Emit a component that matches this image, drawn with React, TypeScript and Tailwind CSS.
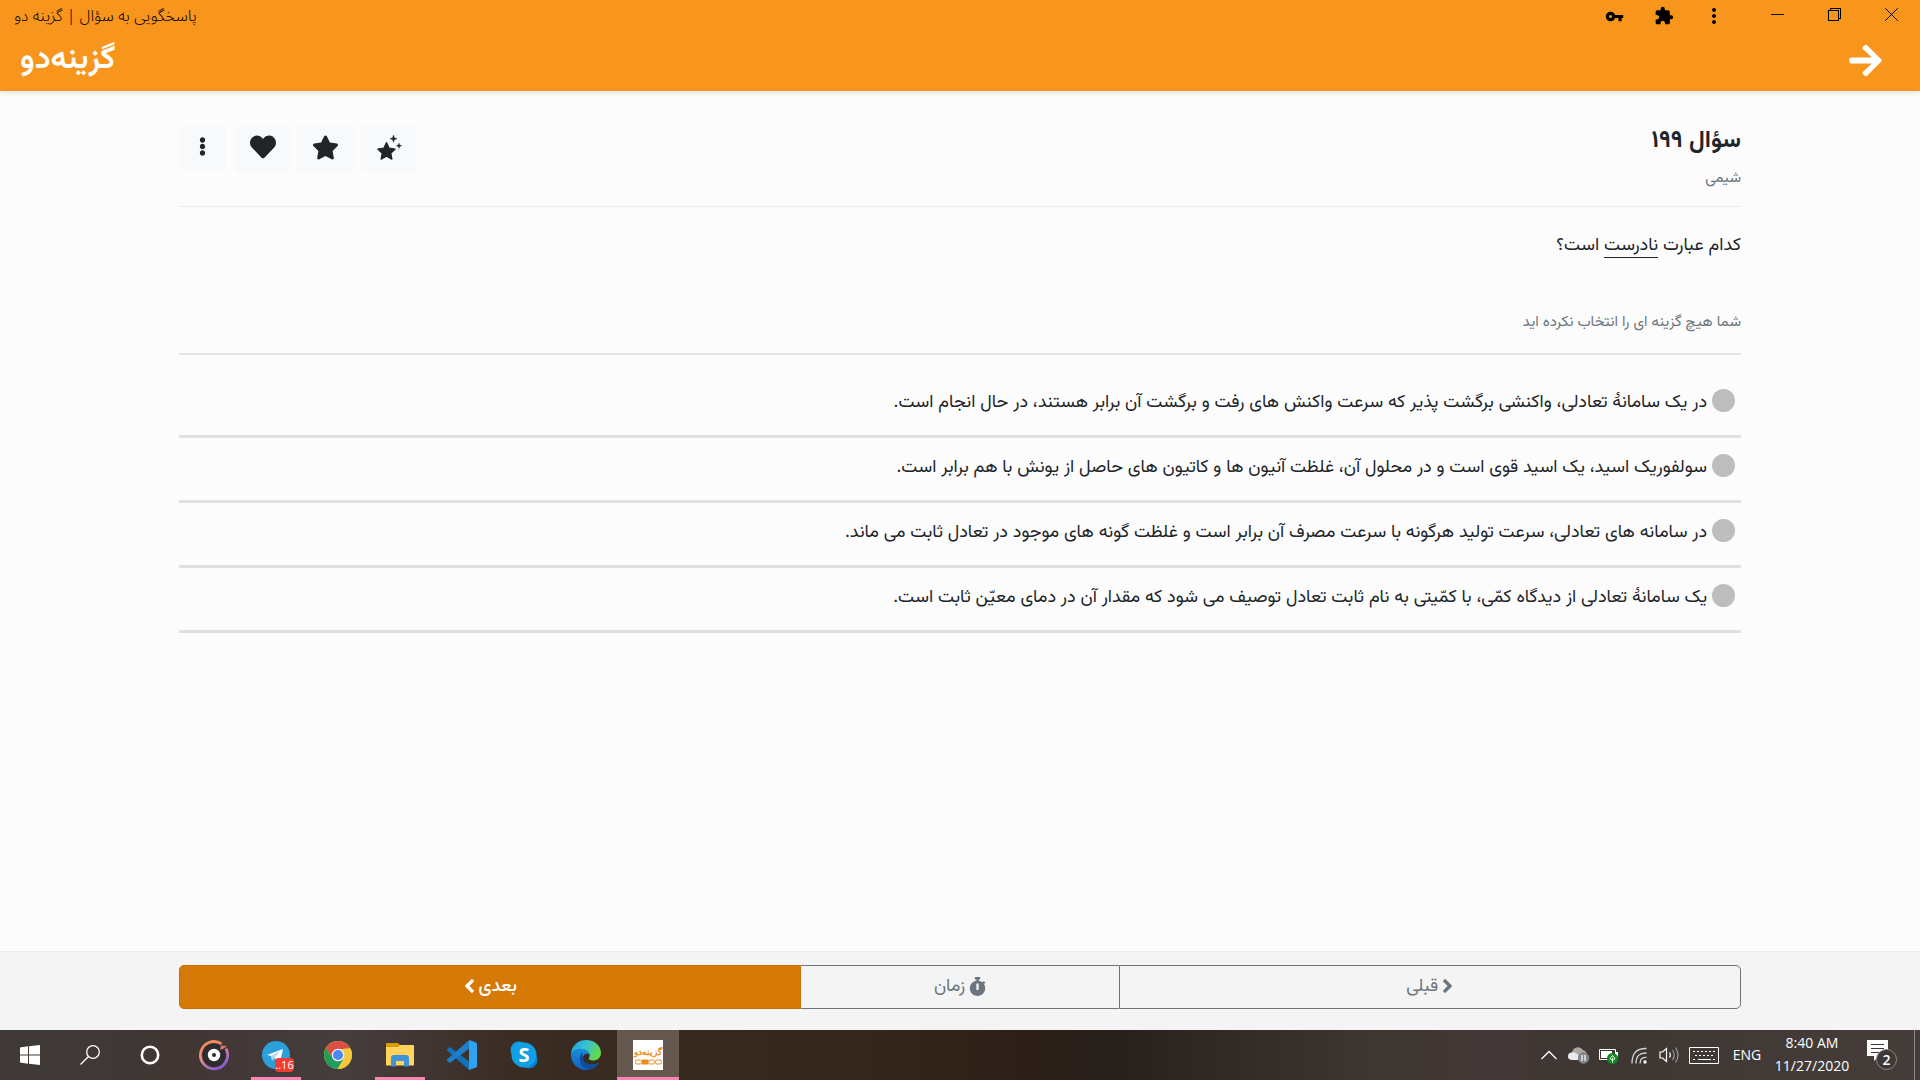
import type { ReactNode } from "react";
import { FaAngleLeft, FaAngleRight, FaArrowRight, FaEllipsisV, FaHeart, FaStar, FaStopwatch } from "react-icons/fa";
import { MdExtension, MdMoreVert, MdVpnKey } from "react-icons/md";

const OPTIONS = [
  "در یک سامانهٔ تعادلی، واکنشی برگشت پذیر که سرعت واکنش های رفت و برگشت آن برابر هستند، در حال انجام است.",
  "سولفوریک اسید، یک اسید قوی است و در محلول آن، غلظت آنیون ها و کاتیون های حاصل از یونش با هم برابر است.",
  "در سامانه های تعادلی، سرعت تولید هرگونه با سرعت مصرف آن برابر است و غلظت گونه های موجود در تعادل ثابت می ماند.",
  "یک سامانهٔ تعادلی از دیدگاه کمّی، با کمّیتی به نام ثابت تعادل توصیف می شود که مقدار آن در دمای معیّن ثابت است.",
];

function TitleBar() {
  return (
    <div className="flex h-8 items-start justify-between pl-3.5 text-black">
      <span dir="rtl" className="pt-1.5 font-['Noto_Sans_Arabic','DejaVu_Sans_Condensed',sans-serif] text-base leading-5 font-light">
        پاسخگویی به سؤال | گزینه دو
      </span>
      <div className="flex h-8">
        <button aria-label="Passwords" className="flex w-[50px] items-center justify-center"><MdVpnKey size={19} /></button>
        <button aria-label="Extensions" className="flex w-[50px] items-center justify-center"><MdExtension size={20} /></button>
        <button aria-label="Menu" className="flex w-[50px] items-center justify-center"><MdMoreVert size={24} /></button>
        <button aria-label="Minimize" className="ml-2.5 flex h-7 w-[57px] items-center justify-center">
          <svg width="13" height="13" viewBox="0 0 13 13" stroke="currentColor" shapeRendering="crispEdges"><path d="M0 6.5h13" /></svg>
        </button>
        <button aria-label="Restore" className="flex h-[29px] w-14 items-center justify-center">
          <svg width="13" height="13" viewBox="0 0 13 13" fill="none" stroke="currentColor" shapeRendering="crispEdges"><path d="M.5 2.5h10v10H.5zM2.500 2.500v-2h10v10h-2" /></svg>
        </button>
        <button aria-label="Close" className="flex h-[29px] w-[58px] items-center justify-center">
          <svg width="13" height="13" viewBox="0 0 13 13" stroke="currentColor"><path d="M.3.3l12.400 12.400M12.700.3L.3 12.700" /></svg>
        </button>
      </div>
    </div>
  );
}

function Header() {
  return (
    <header className="relative z-10 h-[91px] bg-[#f8951d] shadow-[0_2px_5px_rgba(0,0,0,0.1)]">
      <TitleBar />
      <div className="flex h-14 items-center justify-between pl-5 pr-9">
        <a href="#home" dir="rtl" className="text-[32px] leading-[56px] font-semibold text-white">گزینه‌دو</a>
        <button aria-label="بازگشت" className="text-white"><FaArrowRight size={37} /></button>
      </div>
    </header>
  );
}

function ToolButton({ label, className, children }: { label: string; className: string; children: ReactNode }) {
  return (
    <button aria-label={label} className={`flex items-center justify-center rounded bg-[#f8f9fa] text-[#212529] ${className}`}>
      {children}
    </button>
  );
}

function Sparkle() {
  return (
    <svg width="25" height="25" viewBox="0 0 25 25" fill="currentColor" stroke="currentColor" strokeLinejoin="round">
      <path strokeWidth="1.200" d="M9.500 7.600l2.700 5.600 6 .8-4.400 4.200 1.100 6-5.400-2.900-5.400 2.900 1.100-6L.8 14l6-.8z" />
      <path strokeWidth=".3" d="M16.500 0l1 2.700 2.700 1-2.700 1-1 2.700-1-2.700-2.700-1 2.700-1zM22 8l.8 2 2 .8-2 .8-.8 2-.8-2-2-.8 2-.8z" />
    </svg>
  );
}

function Question() {
  return (
    <main dir="rtl" className="mx-auto w-full max-w-[1562px] flex-1 pt-8 text-[#212529]">
      <div className="flex h-[84px] items-start justify-between border-b border-[#ebebec]">
        <div className="flex flex-col pt-0.5">
          <h1 className="text-2xl leading-8 font-bold">سؤال ۱۹۹</h1>
          <p className="mt-2.5 text-[15px] leading-6 text-[#6c757d]">شیمی</p>
        </div>
        <div dir="ltr" className="flex items-start pt-[3px]">
          <ToolButton label="بیشتر" className="mr-[9px] h-11 w-[47px] pb-1"><FaEllipsisV size={19} /></ToolButton>
          <ToolButton label="علاقه‌مندی" className="mr-[5px] h-[46px] w-14 pb-1"><FaHeart size={26} /></ToolButton>
          <ToolButton label="ستاره" className="mr-1.5 h-[46px] w-[59px] pb-1"><FaStar size={27} /></ToolButton>
          <ToolButton label="ویژه" className="h-[46px] w-14 pb-1"><Sparkle /></ToolButton>
        </div>
      </div>
      <p className="mt-[25px] text-lg leading-7">
        کدام عبارت <span className="inline-block border-b border-[#212529] leading-[22px]">نادرست</span> است؟
      </p>
      <p className="mt-[51px] text-[15px] leading-6 text-[#6c757d]">شما هیچ گزینه ای را انتخاب نکرده اید</p>
      <fieldset className="mt-[18px] border-t-2 border-[#e6e6e6] pt-[18px]">
        {OPTIONS.map((text) => (
          <label key={text} className="flex h-[65px] items-start gap-[5px] border-b-3 border-[#e0e0e0] pt-4 pr-1.5 text-lg">
            <input type="radio" name="answer" className="size-[23px] appearance-none rounded-full bg-[#bdbdbd]" />
            <span className="leading-7">{text}</span>
          </label>
        ))}
      </fieldset>
    </main>
  );
}

function Footer() {
  return (
    <footer dir="rtl" className="h-[79px] border-t border-[#ececec] bg-[#f4f4f4] pt-[13px]">
      <div className="mx-auto flex h-11 w-full max-w-[1562px] text-lg text-[#6c757d]">
        <button className="flex flex-[622] items-center justify-center gap-1 rounded-r-[5px] border border-[#6c757d]">
          <FaAngleRight className="mb-0.5 h-[22px] w-[11px]" />قبلی
        </button>
        <button className="flex flex-[318] items-center justify-center gap-1 border-y border-[#6c757d]">
          <FaStopwatch className="mb-0.5 h-[19px] w-[17px]" />زمان
        </button>
        <button className="flex flex-[622] items-center justify-center gap-1 rounded-l-[5px] border border-[#c46f0a] bg-[#d57907] font-medium text-white">
          بعدی<FaAngleLeft className="mb-0.5 h-[22px] w-[11px]" />
        </button>
      </div>
    </footer>
  );
}

function SoundIcon() {
  return (
    <svg width="32" height="32" viewBox="0 0 32 32" fill="none">
      <defs>
        <linearGradient id="ring" x1="0" y1="0" x2=".6" y2="1"><stop stopColor="#ff8a3c" /><stop offset=".5" stopColor="#e58b8b" /><stop offset="1" stopColor="#8a5fd0" /></linearGradient>
      </defs>
      <circle cx="16" cy="16" r="11.500" fill="#2d2d2f" />
      <path d="M23.500 4.800A13.600 13.600 0 1 0 28 9.700" stroke="url(#ring)" strokeWidth="2.800" />
      <path d="M22 10.500l1-4 6 .5-4 3z" fill="#d4796c" />
      <circle cx="16" cy="16" r="6.200" fill="#fff" /><circle cx="16" cy="16" r="2" fill="#2d2d2f" />
    </svg>
  );
}

function TelegramIcon() {
  return (
    <svg width="28" height="28" viewBox="0 0 28 28">
      <circle cx="14" cy="14" r="14" fill="#2ca0da" />
      <path fill="#fff" d="M5 14L21 8l-3 13-5.500-4-2.500 2.500-.6-4.500z" />
      <path fill="#b7d7eb" d="M9.400 15L18 10l-5.500 7-2.500 2.500z" />
    </svg>
  );
}

function ChromeIcon() {
  return (
    <svg width="28" height="28" viewBox="0 0 28 28">
      <circle cx="14" cy="14" r="14" fill="#f7c83c" />
      <path fill="#d94f43" d="M1.900 7A14 14 0 0 1 26.100 7L14 8.500 8 17z" />
      <path fill="#1f9d5b" d="M1.900 7A14 14 0 0 0 13.500 28L20 17.500l-6 2.500-5.800-3z" />
      <path fill="#f7c83c" d="M14 8h12.600A14 14 0 0 1 13.500 28l6-10z" />
      <circle cx="14" cy="14" r="6.300" fill="#f5f5f5" /><circle cx="14" cy="14" r="5.100" fill="#4a8af4" />
    </svg>
  );
}

function FolderIcon() {
  return (
    <svg width="28" height="24" viewBox="0 0 28 24">
      <path fill="#d89a06" d="M0 1q0-1 1-1h11l2 2v4H0z" />
      <path fill="#ffd45e" d="M0 4h12l2-2h13q1 0 1 1v19.500H0z" />
      <path fill="#3f93d6" d="M5 23.500V15q0-3 3-3h12q3 0 3 3v8.500h-5V18h-8v5.500z" />
    </svg>
  );
}

function CodeIcon() {
  return (
    <svg width="30" height="30" viewBox="0 0 30 30">
      <path fill="#1272b8" d="M0 10.500q-.5-1 .3-1.600L2 7.500q.8-.6 1.600 0L23 22v7.500q-1 .3-2-.6z" />
      <path fill="#1b80c9" d="M0 19.500q-.5 1 .3 1.600L2 22.500q.8.600 1.600 0L23 8V.5q-1-.3-2 .6z" />
      <path fill="#2ea3f2" d="M22 0l7 2.500q1 .5 1 1.500v22q0 1-1 1.500L22 30V0z" />
    </svg>
  );
}

function SkypeIcon() {
  return (
    <span className="relative flex size-7 items-center justify-center font-['Open_Sans',sans-serif] text-xl leading-7 font-bold text-white">
      <svg className="absolute inset-0" width="28" height="28" viewBox="0 0 28 28">
        <circle cx="9" cy="9" r="8.500" fill="#0e9ce8" /><circle cx="19" cy="19" r="8.500" fill="#0b7fd0" /><circle cx="14" cy="14" r="12.500" fill="#119fe6" />
      </svg>
      <span className="relative">S</span>
    </span>
  );
}

function EdgeIcon() {
  return (
    <svg width="30" height="30" viewBox="0 0 30 30">
      <defs>
        <linearGradient id="edge-top" x1="0" y1="0" x2="1" y2=".4"><stop stopColor="#1f9ad6" /><stop offset=".5" stopColor="#35c1d8" /><stop offset="1" stopColor="#62d84c" /></linearGradient>
        <linearGradient id="edge-low" x1="0" y1="0" x2="0" y2="1"><stop stopColor="#1b8fdd" /><stop offset="1" stopColor="#0d62bd" /></linearGradient>
      </defs>
      <path fill="url(#edge-low)" d="M0 15C1 8 8 6 14 8c4 1.500 5 4 5 6.500-4-2-7 0-7 4 0 5 6 8 15.500 4.500C24 28 20 30 15 30 6 30 0 23 0 15z" />
      <path fill="#124d99" d="M11 12c-5 7-1 17 7.500 17.500 4-.8 7-3 9-6.500C19 26 12 23 12 18z" />
      <path fill="url(#edge-top)" d="M0 15C0 6 7 0 15 0c9 0 15 6 15 13 0 5-4 7.500-8 7.500-2.500 0-5-1-4-3 2-3 0-7.500-6-8.500C6 8 1 10.500 0 15z" />
    </svg>
  );
}

function BrandTile() {
  return (
    <span className="flex size-[30px] flex-col items-center justify-center bg-white text-[#e98b20]">
      <span dir="rtl" className="text-[9px] leading-[14px] font-bold">گزینه‌دو</span>
      <svg width="27" height="6" viewBox="0 0 27 6" fill="none" stroke="currentColor">
        <rect x=".5" y="1" width="6" height="4" rx="1.500" /><rect x="7.500" y="1" width="5.500" height="4" fill="currentColor" />
        <rect x="14" y="1" width="5.500" height="4" rx="1.500" /><rect x="20.500" y="1" width="6" height="4" rx="1.500" />
      </svg>
    </span>
  );
}

function AppButton({ label, open, active, children }: { label: string; open?: boolean; active?: boolean; children: ReactNode }) {
  return (
    <button aria-label={label} className={`relative flex w-[62px] items-center justify-center ${active ? "bg-[#64574e]" : ""}`}>
      {children}
      {(open || active) && <span className={`absolute bottom-0 h-[3px] bg-[#ff85b1] ${active ? "inset-x-0" : "inset-x-1.5"}`} />}
    </button>
  );
}

function Tray() {
  return (
    <div className="flex h-full items-center text-white">
      <button aria-label="Hidden icons" className="flex w-[30px] justify-center">
        <svg width="16" height="10" viewBox="0 0 16 10" fill="none" stroke="currentColor" strokeWidth="1.300"><path d="M.5 9L8 1.500 15.500 9" /></svg>
      </button>
      <button aria-label="OneDrive" className="flex w-[30px] justify-center">
        <svg width="22" height="18" viewBox="0 0 22 18">
          <path fill="#aaa7a5" d="M4 7a6 6 0 0 1 11-3q4 1 4 6l-6 4z" />
          <path fill="#ebebeb" d="M3.500 14A3.600 3.600 0 0 1 4 6.500q3-1 5 1.500l8 4-4 2z" />
          <circle cx="15.500" cy="12" r="5.700" fill="#808588" /><path stroke="#fff" strokeWidth="1.200" d="M14 9v6M17 9v6" />
        </svg>
      </button>
      <button aria-label="Battery" className="flex w-[30px] justify-center">
        <svg width="20" height="18" viewBox="0 0 20 18" fill="none">
          <path stroke="#fff" d="M.5 3.500h16v10H.5z" /><path fill="#fff" d="M2 5h11v7H2zM17 6h2v5h-2z" />
          <circle cx="13.500" cy="12.500" r="5.500" fill="#0d8a1c" /><path stroke="#fff" d="M13.500 9.500l2.500 3-2.500 2-2.500-2zM13.500 12v4.500" />
        </svg>
      </button>
      <button aria-label="Network" className="flex w-[30px] justify-center">
        <svg width="17" height="17" viewBox="0 0 17 17" fill="none" stroke="#d8d6d5" strokeWidth="1.300">
          <path d="M1 16.500Q1 1 15.500 1.500M5 16.500q0-11 10.500-10.500M9 16.500q0-6.500 6.500-6" /><circle cx="14" cy="15" r="1.700" fill="#fff" stroke="none" />
        </svg>
      </button>
      <button aria-label="Volume" className="flex w-[30px] justify-center">
        <svg width="21" height="18" viewBox="0 0 21 18" fill="none" stroke="#fff" strokeWidth="1.200">
          <path d="M1 6h2.500L7.500 2.500v13L3.500 12H1z" /><path d="M10.500 6.500q1.700 2.500 0 5" /><path stroke="#9c9896" d="M13.500 4q3.500 5 0 10M16.500 1.500q5 7.500 0 15" />
        </svg>
      </button>
      <button aria-label="Touch keyboard" className="flex w-10 justify-center">
        <svg width="30" height="17" viewBox="0 0 30 17" fill="none" stroke="#fff">
          <path d="M.5.5h29v16H.5z" /><path strokeDasharray="2 2" d="M4 4.500h22M6 8.500h20" /><path d="M4 12.500h2M9 12.500h13M24 12.500h2" />
        </svg>
      </button>
      <button className="w-[46px] text-sm">ENG</button>
      <button className="flex w-[84px] flex-col items-center pb-0.5 text-sm leading-[23px]"><span>8:40 AM</span><span>11/27/2020</span></button>
      <button aria-label="Notifications" className="ml-1 flex w-12 justify-center">
        <span className="relative block h-[30px] w-[30px]">
          <svg width="21" height="21" viewBox="0 0 21 21"><path fill="#fff" d="M0 0h21v16H12l-5 5v-5H0z" /><path stroke="#3c3634" d="M4 4.500h13M4 8.500h13M4 12.500h8" /></svg>
          <span className="absolute top-[9px] left-[9px] flex size-[21px] items-center justify-center rounded-full border border-[#8c8785] bg-[#3e3937] text-sm font-semibold">2</span>
        </span>
      </button>
      <span className="ml-2 mr-[5px] h-full w-px bg-[#8d8785]" />
    </div>
  );
}

function Taskbar() {
  return (
    <nav className="flex h-[50px] justify-between bg-[linear-gradient(90deg,#3f3a37_0%,#403634_10%,#463d3e_18%,#3a2c22_27%,#35261b_45%,#2e2018_53%,#28201c_58%,#3f3732_72%,#423736_78%,#3d3732_84%,#463d3b_100%)] font-['Open_Sans',sans-serif] text-white">
      <div className="flex">
        <button aria-label="Start" className="flex w-[60px] items-center justify-center">
          <svg width="20" height="20" viewBox="0 0 20 20" fill="currentColor"><path d="M0 2.500l8-1.200v8.200H0zM9 1.200L20 0v9.500H9zM0 10.500h8v8.200l-8-1.200zM9 10.500h11V20L9 18.800z" /></svg>
        </button>
        <button aria-label="Search" className="flex w-[60px] items-center justify-center">
          <svg width="20" height="20" viewBox="0 0 20 20" fill="none" stroke="currentColor" strokeWidth="1.300"><circle cx="13" cy="7" r="6.300" /><path d="M8.500 11.500L.5 19.500" /></svg>
        </button>
        <button aria-label="Cortana" className="mr-[3px] flex w-[60px] items-center justify-center">
          <svg width="20" height="20" viewBox="0 0 20 20" fill="none" stroke="currentColor" strokeWidth="2.600"><circle cx="10" cy="10" r="8.200" /></svg>
        </button>
        <AppButton label="Music"><SoundIcon /></AppButton>
        <AppButton label="Telegram" open>
          <TelegramIcon />
          <span className="absolute top-7 left-[30px] flex h-[14px] w-[19px] items-center justify-center rounded bg-[#f23c34] text-[11px]">..16</span>
        </AppButton>
        <AppButton label="Chrome"><ChromeIcon /></AppButton>
        <AppButton label="Files" open><FolderIcon /></AppButton>
        <AppButton label="Code"><CodeIcon /></AppButton>
        <AppButton label="Skype"><SkypeIcon /></AppButton>
        <AppButton label="Edge"><EdgeIcon /></AppButton>
        <AppButton label="گزینه دو" active><BrandTile /></AppButton>
      </div>
      <Tray />
    </nav>
  );
}

export default function App() {
  return (
    <div className="flex min-h-screen flex-col bg-[#fcfcfc] font-[Vazirmatn,'DejaVu_Sans_Condensed',sans-serif]">
      <Header />
      <Question />
      <Footer />
      <Taskbar />
    </div>
  );
}
